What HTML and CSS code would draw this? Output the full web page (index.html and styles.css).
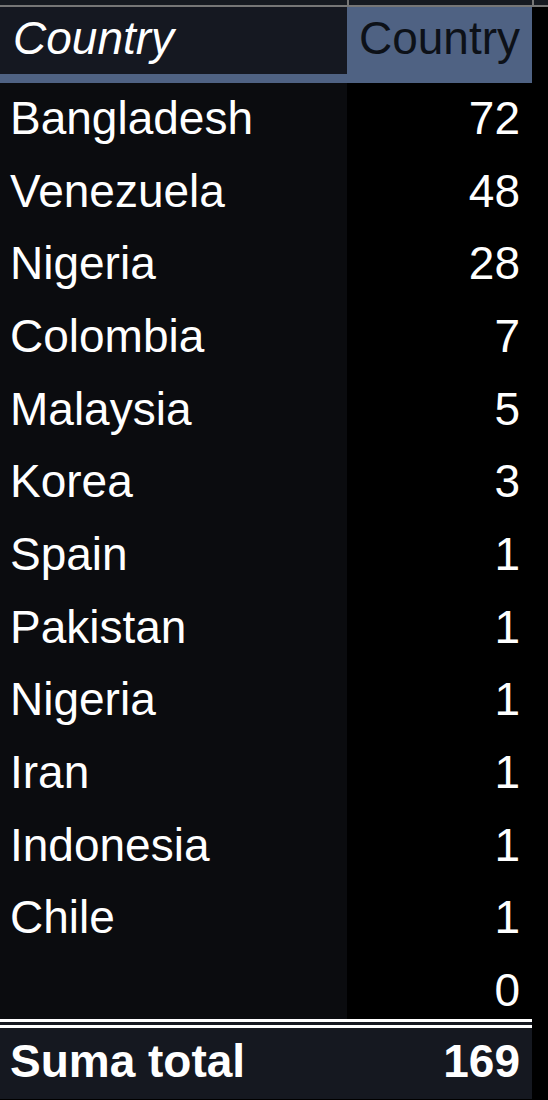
FILE: index.html
```html
<!DOCTYPE html>
<html lang="en">
  <head>
    <title>Country totals</title>
    <meta charset="UTF-8" />
    <meta name="viewport" content="width=device-width" />
    <link rel="stylesheet" href="styles.css">
  </head>
  <body>
    <div class="pivot">
      <div class="strip">
        <span class="strip-cell"></span>
        <span class="strip-cell"></span>
      </div>
      <div class="head">
        <div class="cell label head-label">Country</div>
        <div class="cell value head-value">Country</div>
      </div>
      <div class="rows">
        <div class="row"><div class="cell label">Bangladesh</div><div class="cell value">72</div></div>
        <div class="row"><div class="cell label">Venezuela</div><div class="cell value">48</div></div>
        <div class="row"><div class="cell label">Nigeria</div><div class="cell value">28</div></div>
        <div class="row"><div class="cell label">Colombia</div><div class="cell value">7</div></div>
        <div class="row"><div class="cell label">Malaysia</div><div class="cell value">5</div></div>
        <div class="row"><div class="cell label">Korea</div><div class="cell value">3</div></div>
        <div class="row"><div class="cell label">Spain</div><div class="cell value">1</div></div>
        <div class="row"><div class="cell label">Pakistan</div><div class="cell value">1</div></div>
        <div class="row"><div class="cell label">Nigeria</div><div class="cell value">1</div></div>
        <div class="row"><div class="cell label">Iran</div><div class="cell value">1</div></div>
        <div class="row"><div class="cell label">Indonesia</div><div class="cell value">1</div></div>
        <div class="row"><div class="cell label">Chile</div><div class="cell value">1</div></div>
        <div class="row"><div class="cell label"></div><div class="cell value">0</div></div>
      </div>
      <div class="total">
        <div class="cell label">Suma total</div>
        <div class="cell value">169</div>
      </div>
    </div>
  </body>
</html>
```

FILE: styles.css
```css
* {
  box-sizing: border-box;
}

html,
body {
  margin: 0;
  height: 100%;
  background-color: #000;
}

body {
  font-family: "Liberation Sans", Arial, sans-serif;
  font-size: 46px;
  color: #fff;
  overflow: hidden;
}

.pivot {
  width: 532px;
}

.strip {
  display: grid;
  grid-template-columns: 347px 185px 16px;
  width: 548px;
  height: 7px;
  background-color: #161a21;
  border-bottom: 2px solid #767676;
}

.strip-cell:first-child {
  grid-column: 2;
  border-left: 2px solid #767676;
}

.strip-cell:last-child {
  border-left: 2px solid #767676;
}

.head,
.row,
.total {
  display: grid;
  grid-template-columns: 347px 185px;
  grid-template-rows: 100%;
}

.cell {
  white-space: nowrap;
}

.label {
  padding-left: 10px;
}

.value {
  text-align: right;
  padding-right: 12px;
}

.head {
  height: 76px;
  background-color: #4f6283;
}

.head .cell {
  line-height: 63px;
}

.head-label {
  padding-left: 13px;
  font-style: italic;
  background-color: #151821;
  height: 67px;
}

.head-value {
  color: #0d1118;
}

.row {
  height: 72.67px;
}

.row .cell {
  line-height: 70px;
}

.row .label {
  background-color: #0b0c0f;
}

.row .value {
  background-color: #000;
}

.row:last-child {
  height: 64px;
}

.total {
  height: 80px;
  border-top: 9px double #fff;
  background-color: #151820;
  font-weight: bold;
}

.total .cell {
  line-height: 66px;
}
```
